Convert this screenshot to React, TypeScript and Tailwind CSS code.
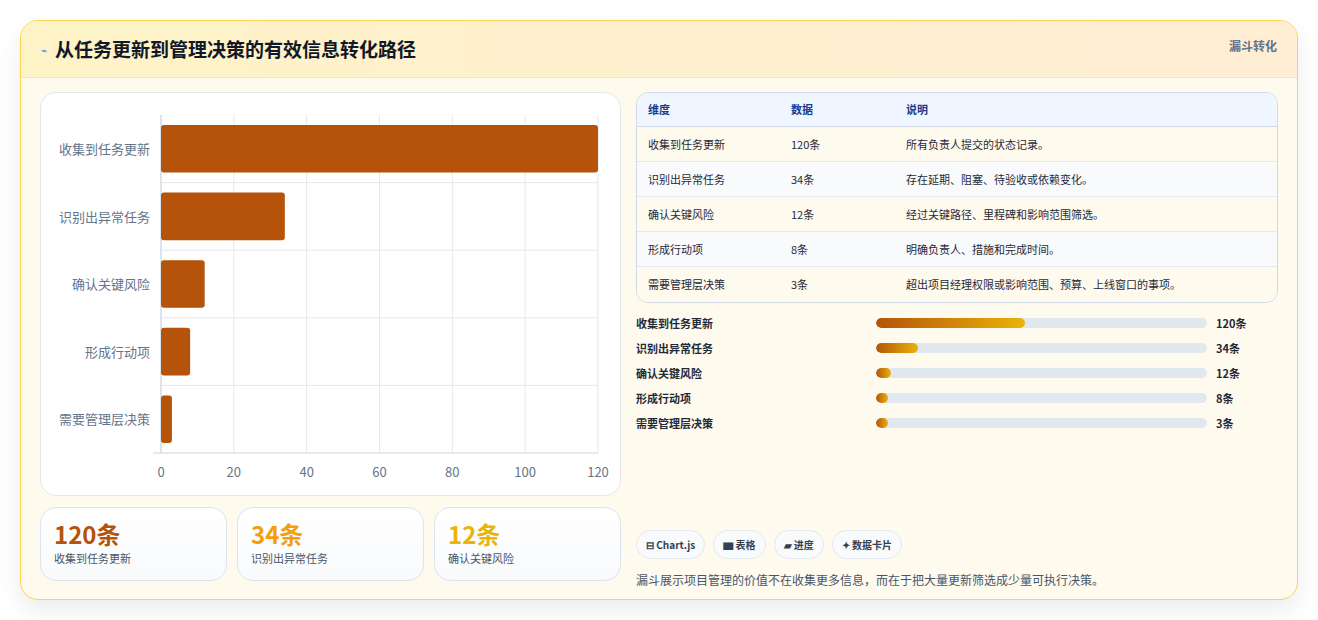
import React from "react";

const F = { fontFamily: '"Noto Sans CJK SC", "Noto Sans", sans-serif' };
const data = [
  ["收集到任务更新", 120, "所有负责人提交的状态记录。"],
  ["识别出异常任务", 34, "存在延期、阻塞、待验收或依赖变化。"],
  ["确认关键风险", 12, "经过关键路径、里程碑和影响范围筛选。"],
  ["形成行动项", 8, "明确负责人、措施和完成时间。"],
  ["需要管理层决策", 3, "超出项目经理权限或影响范围、预算、上线窗口的事项。"],
] as const;

function Chart() {
  const W = 437, H = 338;
  const rowH = H / 5;
  return (
    <div className="h-[404px] rounded-2xl bg-white border border-[#e5e7eb] flex pt-[22px] pl-[14px]">
      <div className="w-[106px] h-[338px] flex flex-col">
        {data.map((d) => (
          <div key={d[0]} className="flex-1 flex items-center justify-end pr-[11px] text-[13px] text-[#64748b]">{d[0]}</div>
        ))}
      </div>
      <div className="relative">
        <svg width={W + 20} height={H + 40} className="block -ml-[12px]" style={{ overflow: "visible" }}>
          <g transform="translate(12,0)">
            {[0, 20, 40, 60, 80, 100, 120].map((v) => (
              <line key={v} x1={(v / 120) * W} x2={(v / 120) * W} y1={0} y2={H} stroke="#e5e7eb" />
            ))}
            {[1, 2, 3, 4].map((i) => (
              <line key={i} x1={0} x2={W} y1={i * rowH} y2={i * rowH} stroke="#e5e7eb" />
            ))}
            <line x1={-8} x2={W} y1={H} y2={H} stroke="#cbd5e1" />
            <line x1={0} x2={0} y1={0} y2={H} stroke="#cbd5e1" />
            {data.map((d, i) => (
              <rect key={d[0]} x={0} y={i * rowH + 10} width={(d[1] / 120) * W} height={rowH - 20} rx={3} fill="#b45309" />
            ))}
            {[0, 20, 40, 60, 80, 100, 120].map((v) => (
              <text key={v} x={(v / 120) * W} y={H + 24} textAnchor="middle" fontSize={13} fill="#64748b" style={F}>{v}</text>
            ))}
          </g>
        </svg>
      </div>
    </div>
  );
}

export default function App() {
  return (
    <div className="w-[1318px] h-[620px] bg-white pt-[20px] px-[20px]" style={F}>
      <div className="w-[1278px] h-[580px] rounded-[18px] border border-[#fcd34d] bg-[#fffaee] shadow-[0_10px_25px_rgba(0,0,0,0.08)] overflow-hidden flex flex-col">
        <div className="h-[57px] shrink-0 bg-gradient-to-r from-[#fef3c7] to-[#ffedd5] border-b border-[#f5e6c0] flex items-start justify-between px-[20px]">
          <div className="flex items-center gap-[8px] mt-[14px]">
            <span className="text-[10px] text-[#3b82f6]">⌁</span>
            <span className="text-[19px] font-bold text-[#111827]">从任务更新到管理决策的有效信息转化路径</span>
          </div>
          <span className="mt-[16px] text-[12px] font-bold text-[#64748b]">漏斗转化</span>
        </div>
        <div className="flex-1 flex gap-[15px] px-[19px] pt-[14px]">
          <div className="w-[581px] flex flex-col gap-[11px]">
            <Chart />
            <div className="grid grid-cols-3 gap-[10px]">
              {[["120条", "#b45309", "收集到任务更新"], ["34条", "#f59e0b", "识别出异常任务"], ["12条", "#eab308", "确认关键风险"]].map((s) => (
                <div key={s[0]} className="h-[74px] rounded-2xl border border-[#dbe4f0] bg-gradient-to-b from-white to-[#f8fafc] px-[13px] pt-[11px]">
                  <div className="text-[24px] leading-[30px] font-bold" style={{ color: s[1] }}>{s[0]}</div>
                  <div className="text-[11px] text-[#475569] mt-[1px]">{s[2]}</div>
                </div>
              ))}
            </div>
          </div>
          <div className="flex-1 flex flex-col">
            <div className="rounded-xl border border-[#d1d9e6] overflow-hidden text-[11px] text-[#1f2937]">
              <div className="h-[34px] bg-[#eff6ff] flex items-center font-bold text-[#1e3a8a] border-b border-[#d1d9e6]">
                <div className="w-[154px] pl-[11px]">维度</div><div className="w-[115px]">数据</div><div>说明</div>
              </div>
              {data.map((d, i) => (
                <div key={d[0]} className={`h-[35px] flex items-center ${i % 2 ? "bg-[#f8fafc]" : "bg-[#fffaee]"} ${i < 4 ? "border-b border-[#e2e8f0]" : ""}`}>
                  <div className="w-[154px] pl-[11px]">{d[0]}</div><div className="w-[115px]">{d[1]}条</div><div>{d[2]}</div>
                </div>
              ))}
            </div>
            <div className="flex flex-col gap-[9px] mt-[12px] text-[11px] font-bold text-[#1f2937]">
              {data.map((d) => (
                <div key={d[0]} className="h-[16px] flex items-center">
                  <div className="w-[240px]">{d[0]}</div>
                  <div className="w-[331px] h-[10px] rounded-full bg-[#e2e8f0] overflow-hidden">
                    <div className="h-full rounded-full bg-gradient-to-r from-[#b45309] to-[#eab308]" style={{ width: Math.max((d[1] / 120) * 45, 3.6) + "%" }} />
                  </div>
                  <div className="ml-[9px]">{d[1]}条</div>
                </div>
              ))}
            </div>
            <div className="flex gap-[8px] mt-[99px] text-[10px] font-bold text-[#334155]">
              {["⊟ Chart.js", "▆ 表格", "▰ 进度", "✦ 数据卡片"].map((c) => (
                <div key={c} className="h-[29px] px-[9px] rounded-full border border-[#e2e8f0] bg-[#f8fafc] flex items-center">{c}</div>
              ))}
            </div>
            <div className="mt-[12px] text-[12px] text-[#475569]">漏斗展示项目管理的价值不在收集更多信息，而在于把大量更新筛选成少量可执行决策。</div>
          </div>
        </div>
      </div>
    </div>
  );
}
